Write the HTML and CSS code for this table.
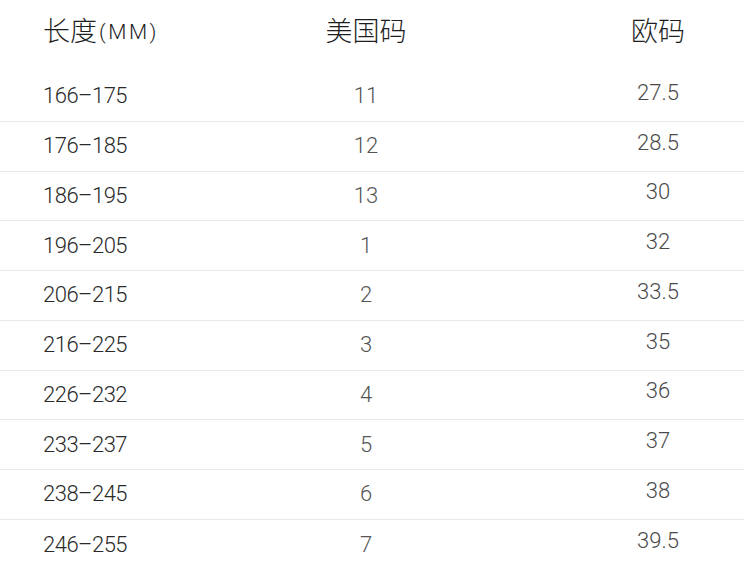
FILE: index.html
```html
<!DOCTYPE html>
<html lang="zh-CN">
<head>
<meta charset="utf-8">
<title>尺码表</title>
<link rel="stylesheet" href="styles.css">
</head>
<body>
<div class="table">
  <div class="row head">
    <div class="c1">长度<span class="unit">(MM)</span></div>
    <div class="c2">美国码</div>
    <div class="c3">欧码</div>
  </div>
  <div class="row"><div class="c1">166–175</div><div class="c2">11</div><div class="c3">27.5</div></div>
  <div class="row"><div class="c1">176–185</div><div class="c2">12</div><div class="c3">28.5</div></div>
  <div class="row"><div class="c1">186–195</div><div class="c2">13</div><div class="c3">30</div></div>
  <div class="row"><div class="c1">196–205</div><div class="c2">1</div><div class="c3">32</div></div>
  <div class="row"><div class="c1">206–215</div><div class="c2">2</div><div class="c3">33.5</div></div>
  <div class="row"><div class="c1">216–225</div><div class="c2">3</div><div class="c3">35</div></div>
  <div class="row"><div class="c1">226–232</div><div class="c2">4</div><div class="c3">36</div></div>
  <div class="row"><div class="c1">233–237</div><div class="c2">5</div><div class="c3">37</div></div>
  <div class="row"><div class="c1">238–245</div><div class="c2">6</div><div class="c3">38</div></div>
  <div class="row last"><div class="c1">246–255</div><div class="c2">7</div><div class="c3">39.5</div></div>
</div>
</body>
</html>
```
FILE: styles.css
```css
html, body {
  margin: 0;
  padding: 0;
  background: #ffffff;
}
body {
  width: 744px;
  font-family: Roboto, "Noto Sans CJK SC", sans-serif;
}
.table {
  display: flex;
  flex-direction: column;
}
.row {
  display: grid;
  grid-template-columns: 193px 260px 1fr;
  align-items: center;
  padding-left: 43px;
  height: 49.75px;
  box-sizing: border-box;
  border-bottom: 1.5px solid #e9e9e9;
  font-size: 22px;
  font-weight: 300;
  line-height: 1;
}
.row.last {
  border-bottom: none;
}
.row.head {
  height: 72px;
  padding-bottom: 14px;
  border-bottom: none;
  font-family: "Noto Sans CJK SC", sans-serif;
  font-size: 27px;
  font-weight: 300;
  color: #1e1e1e;
}
.c1 {
  color: #2a2a2a;
  letter-spacing: -0.5px;
}
.c2 {
  text-align: center;
  color: #555555;
}
.c3 {
  text-align: center;
  padding-left: 76px;
  padding-bottom: 7px;
  color: #4a4a4a;
}
.head .c1, .head .c2, .head .c3 {
  color: #1e1e1e;
  letter-spacing: 0;
}
.head .c3 {
  padding-bottom: 0;
}
.unit {
  font-family: Roboto, sans-serif;
  font-size: 21px;
  font-weight: 300;
  letter-spacing: 2.5px;
  margin-left: 2px;
  vertical-align: 2px;
}
```
